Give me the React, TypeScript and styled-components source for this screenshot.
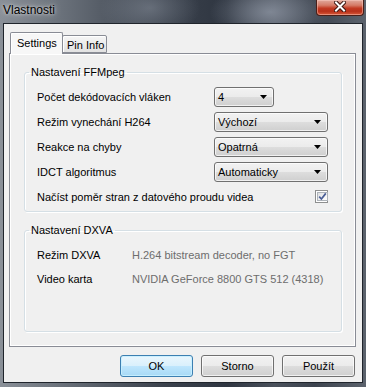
import React from "react";
import styled, { createGlobalStyle } from "styled-components";

const GlobalStyle = createGlobalStyle`
  html, body { margin: 0; padding: 0; width: 366px; height: 387px; overflow: hidden; }
  body { font-family: "Liberation Sans", Arial, sans-serif; font-size: 11px; color: #000; }
  * { box-sizing: border-box; }
`;

const Window = styled.div`
  width: 366px;
  height: 387px;
  display: flex;
  flex-direction: column;
  padding: 0 3px 4px 3px;
  background:
    radial-gradient(ellipse 60px 30px at 270px 12px, rgba(150,158,172,0.7), rgba(150,158,172,0) 100%),
    radial-gradient(ellipse 50px 30px at 150px 8px, rgba(140,148,160,0.5), rgba(140,148,160,0) 100%),
    linear-gradient(90deg, #8a9098 0%, #737a83 12%, #555c66 28%, #3a414c 45%, #2f3641 62%, #4a515c 75%, #3c434e 86%, #5c636d 100%);
`;

const TitleBar = styled.div`
  height: 23px;
  display: flex;
  align-items: flex-start;
  flex-shrink: 0;
`;

const Title = styled.span`
  font-size: 12px;
  line-height: 16px;
  margin-top: 2px;
  color: #000;
  text-shadow: 0 0 6px rgba(255,255,255,0.7), 0 0 3px rgba(255,255,255,0.6);
`;

const CloseButton = styled.div`
  margin-left: auto;
  margin-right: -1px;
  width: 48px;
  height: 16px;
  border: 1px solid #4a1f18;
  border-top: none;
  border-radius: 0 0 4px 4px;
  background: linear-gradient(180deg, #e0a99c 0%, #d57b67 35%, #c23a22 55%, #b8301a 75%, #d75a3a 100%);
  box-shadow: inset 0 0 0 1px rgba(255,210,200,0.45);
  display: flex;
  align-items: flex-start;
  justify-content: center;
  padding-top: 1px;
`;

const Client = styled.div`
  flex: 1;
  display: flex;
  flex-direction: column;
  border: 1px solid #20252c;
  background: #f0f0f0;
  padding: 8px 6px 0 5px;
`;

const TabStrip = styled.div`
  display: flex;
  align-items: flex-end;
  height: 21px;
  padding-left: 1px;
  position: relative;
  z-index: 1;
`;

const Tab = styled.div<{ $active?: boolean }>`
  height: ${(p) => (p.$active ? "22px" : "18px")};
  margin-bottom: ${(p) => (p.$active ? "-1px" : "0")};
  margin-left: ${(p) => (p.$active ? "0" : "-1px")};
  width: ${(p) => (p.$active ? "53px" : "45px")};
  border: 1px solid #898c95;
  border-bottom: ${(p) => (p.$active ? "none" : "1px solid #898c95")};
  border-radius: 2px 2px 0 0;
  background: ${(p) =>
    p.$active ? "#f7f7f7" : "linear-gradient(180deg, #f6f6f6 0%, #ececec 50%, #e2e2e2 100%)"};
  box-shadow: inset 1px 1px 0 #fff;
  padding-left: ${(p) => (p.$active ? "6px" : "4px")};
  padding-top: ${(p) => (p.$active ? "2px" : "1px")};
  line-height: 16px;
  white-space: nowrap;
  z-index: ${(p) => (p.$active ? 2 : 1)};
`;

const Panel = styled.div`
  height: 294px;
  border: 1px solid #898c95;
  box-shadow: inset 1px 1px 0 #fff, inset -1px -1px 0 #fff;
  background: #f0f0f0;
  padding: 10px 13px 0 14px;
  display: flex;
  flex-direction: column;
  gap: 10px;
`;

const Group = styled.fieldset<{ $pb: number; $pt: number }>`
  margin: 0;
  min-width: 0;
  border: 1px solid #d5dfe5;
  border-radius: 3px;
  box-shadow: 1px 1px 0 #fff, inset 1px 1px 0 #fff;
  padding: ${(p) => p.$pt}px 13px ${(p) => p.$pb}px 12px;
`;

const Legend = styled.legend`
  padding: 0 2px;
  margin-left: -8px;
  line-height: 16px;
  color: #000;
`;

const FormGrid = styled.div<{ $label: number; $row: number }>`
  display: grid;
  grid-template-columns: ${(p) => p.$label}px 1fr;
  grid-auto-rows: ${(p) => p.$row}px;
  align-items: center;
`;

const Label = styled.span`
  white-space: nowrap;
`;

const Value = styled.span`
  color: #6d6d6d;
  white-space: nowrap;
`;

const Combo = styled.div<{ $w: number }>`
  width: ${(p) => p.$w}px;
  height: 20px;
  border: 1px solid #707070;
  border-radius: 3px;
  background: linear-gradient(180deg, #f2f2f2 0%, #ebebeb 50%, #dddddd 51%, #cfcfcf 100%);
  box-shadow: inset 0 0 0 1px rgba(255,255,255,0.7);
  display: flex;
  align-items: center;
  justify-content: space-between;
  padding: 0 6px 0 3px;
  line-height: 16px;
`;

const CheckRow = styled.div`
  grid-column: 1 / -1;
  display: flex;
  align-items: center;
  justify-content: space-between;
`;

const CheckBox = styled.div`
  width: 13px;
  height: 13px;
  border: 1px solid #8e8f8f;
  background: #fff;
  padding: 1px;
  display: flex;
`;

const CheckInner = styled.div`
  flex: 1;
  border: 1px solid #aeb3b9;
  background: linear-gradient(135deg, #dcdee2 0%, #f4f4f4 60%, #fff 100%);
  display: flex;
  align-items: center;
  justify-content: center;
`;

const ButtonRow = styled.div`
  display: flex;
  justify-content: flex-end;
  gap: 8px;
  margin-top: 8px;
  padding-right: 1px;
`;

const Button = styled.div<{ $default?: boolean }>`
  width: 73px;
  height: 22px;
  border: 1px solid ${(p) => (p.$default ? "#3c7fb1" : "#707070")};
  border-radius: 3px;
  background: ${(p) =>
    p.$default
      ? "linear-gradient(180deg, #eaf6fd 0%, #d9f0fc 50%, #bee6fd 51%, #a7d9f5 100%)"
      : "linear-gradient(180deg, #f2f2f2 0%, #ebebeb 50%, #dddddd 51%, #cfcfcf 100%)"};
  box-shadow: inset 0 0 0 1px ${(p) => (p.$default ? "rgba(200,240,255,0.9)" : "rgba(255,255,255,0.7)")};
  display: flex;
  align-items: center;
  justify-content: center;
  line-height: 16px;
`;

const Arrow = () => (
  <svg width="7" height="4" viewBox="0 0 7 4">
    <polygon points="0,0 7,0 3.5,4" fill="#000" />
  </svg>
);

const CloseGlyph = () => (
  <svg width="12" height="11" viewBox="0 0 12 11">
    <path d="M2 1.5 L10 9.5 M10 1.5 L2 9.5" stroke="#3a1510" strokeWidth="4" strokeLinecap="square" />
    <path d="M2 1.5 L10 9.5 M10 1.5 L2 9.5" stroke="#fff" strokeWidth="2" strokeLinecap="square" />
  </svg>
);

const Check = () => (
  <svg width="9" height="9" viewBox="0 0 9 9">
    <path d="M1.2 4.6 L3.4 7 L7.8 1.4" fill="none" stroke="#4a5e96" strokeWidth="1.7" />
  </svg>
);

export default function App() {
  return (
    <>
      <GlobalStyle />
      <Window>
        <TitleBar>
          <Title>Vlastnosti</Title>
          <CloseButton>
            <CloseGlyph />
          </CloseButton>
        </TitleBar>
        <Client>
          <TabStrip>
            <Tab $active>Settings</Tab>
            <Tab>Pin Info</Tab>
          </TabStrip>
          <Panel>
            <Group $pt={4} $pb={2}>
              <Legend>Nastavení FFMpeg</Legend>
              <FormGrid $label={177} $row={25}>
                <Label>Počet dekódovacích vláken</Label>
                <Combo $w={60}>
                  <span>4</span>
                  <Arrow />
                </Combo>
                <Label>Režim vynechání H264</Label>
                <Combo $w={114}>
                  <span>Výchozí</span>
                  <Arrow />
                </Combo>
                <Label>Reakce na chyby</Label>
                <Combo $w={114}>
                  <span>Opatrná</span>
                  <Arrow />
                </Combo>
                <Label>IDCT algoritmus</Label>
                <Combo $w={114}>
                  <span>Automaticky</span>
                  <Arrow />
                </Combo>
                <CheckRow>
                  <Label>Načíst poměr stran z datového proudu videa</Label>
                  <CheckBox>
                    <CheckInner>
                      <Check />
                    </CheckInner>
                  </CheckBox>
                </CheckRow>
              </FormGrid>
            </Group>
            <Group $pt={5} $pb={40}>
              <Legend>Nastavení DXVA</Legend>
              <FormGrid $label={95} $row={24}>
                <Label>Režim DXVA</Label>
                <Value>H.264 bitstream decoder, no FGT</Value>
                <Label>Video karta</Label>
                <Value>NVIDIA GeForce 8800 GTS 512 (4318)</Value>
              </FormGrid>
            </Group>
          </Panel>
          <ButtonRow>
            <Button $default>OK</Button>
            <Button>Storno</Button>
            <Button>Použít</Button>
          </ButtonRow>
        </Client>
      </Window>
    </>
  );
}
